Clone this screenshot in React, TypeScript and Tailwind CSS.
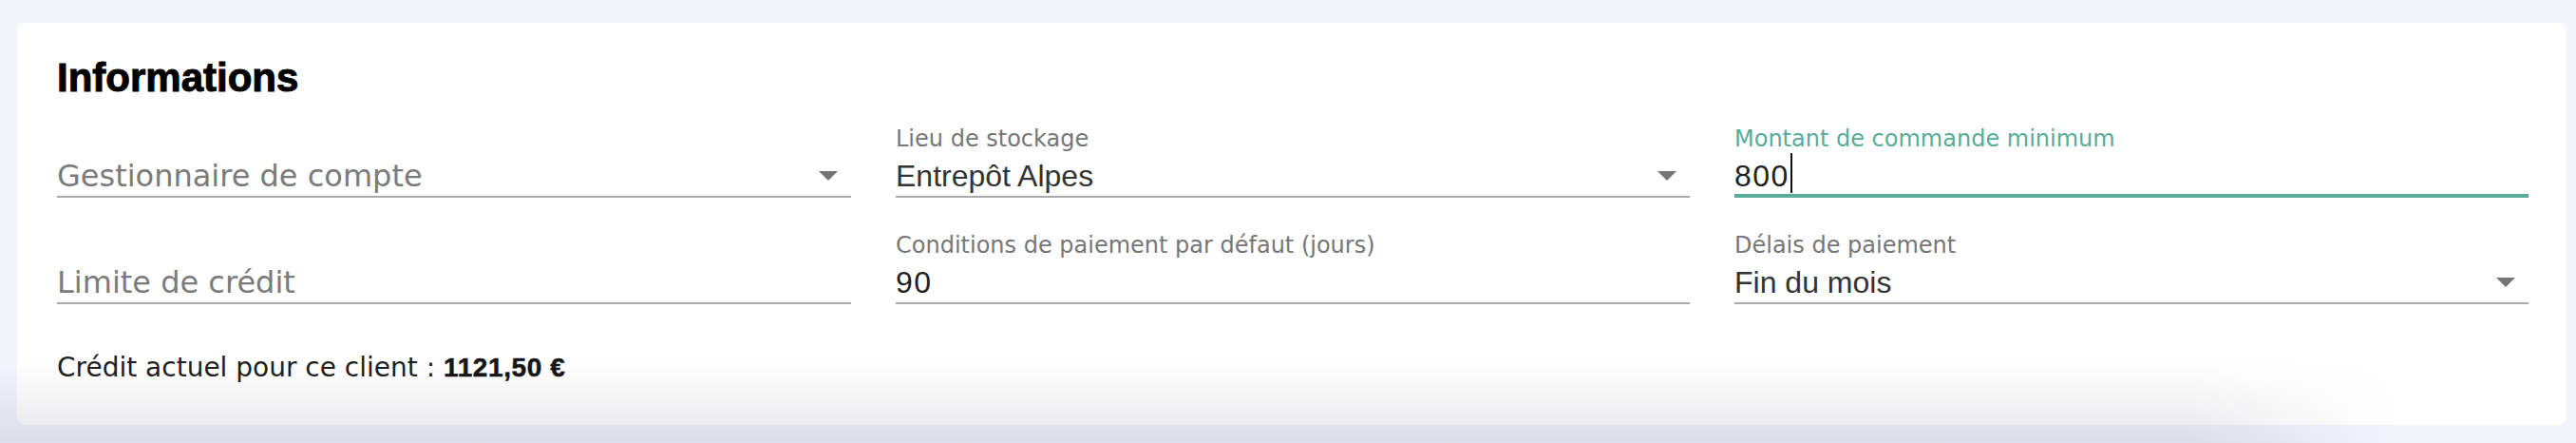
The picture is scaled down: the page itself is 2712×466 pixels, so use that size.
import React from "react";

type Field = {
  label?: string;
  placeholder?: string;
  value?: string;
  select?: boolean;
  focused?: boolean;
  numeric?: boolean;
};

const fields: Field[] = [
  { placeholder: "Gestionnaire de compte", select: true },
  { label: "Lieu de stockage", value: "Entrepôt Alpes", select: true },
  { label: "Montant de commande minimum", value: "800", focused: true, numeric: true },
  { placeholder: "Limite de crédit" },
  { label: "Conditions de paiement par défaut (jours)", value: "90", numeric: true },
  { label: "Délais de paiement", value: "Fin du mois", select: true },
];

function DropArrow() {
  return (
    <svg
      className="absolute right-[14px] top-[13px] h-[10px] w-[20px]"
      viewBox="0 0 20 10"
      aria-hidden
    >
      <polygon points="0,0 20,0 10,10" fill="#757575" />
    </svg>
  );
}

function FormField({ field }: { field: Field }) {
  return (
    <div className="flex flex-col">
      {/* floating label */}
      <div
        className={`h-[28px] font-['DejaVu_Sans',sans-serif] text-[24px] leading-[28px] ${
          field.focused ? "text-[#5aab97]" : "text-[#767676]"
        }`}
      >
        {field.label}
      </div>

      {/* input line */}
      <div
        className={`relative mt-[7px] ${
          field.focused ? "border-b-4 border-[#5aab97] pb-[1px]" : "border-b-2 border-[#a9a9a9] pb-[3px]"
        }`}
      >
        <div className="flex h-[36px] items-start">
          {field.value ? (
            <span
              className={`font-['Liberation_Sans',Arial,sans-serif] text-[32px] leading-[36px] ${
                field.numeric ? "tracking-[1.5px] text-[#1f1f1f]" : "text-[#333333]"
              }`}
            >
              {field.value}
            </span>
          ) : (
            <span className="font-['DejaVu_Sans',sans-serif] text-[32px] leading-[36px] text-[#7b7b7b]">
              {field.placeholder}
            </span>
          )}
          {field.focused && <span className="mt-[-6px] ml-[1px] h-[42px] w-[2px] bg-[#111]" />}
        </div>
        {field.select && <DropArrow />}
      </div>
    </div>
  );
}

export default function App() {
  return (
    <div className="relative h-[466px] w-full overflow-hidden bg-[#f2f5fc] pl-[18px] pr-[10px] pt-[24px]">
      <section className="h-[423px] rounded-[8px] bg-white pl-[42px] pr-[40px] pt-[34px]">
        <h2 className="font-['Liberation_Sans',Arial,sans-serif] text-[42px] font-bold leading-[48px] text-black [-webkit-text-stroke:1px_black]">
          Informations
        </h2>

        <div className="mt-[26px] grid grid-cols-3 gap-x-[47px] gap-y-[36px]">
          {fields.map((f, i) => (
            <FormField key={i} field={f} />
          ))}
        </div>

        <p className="mt-[51px] font-['DejaVu_Sans',sans-serif] text-[28px] leading-[32px] text-[#1f1f1f]">
          Crédit actuel pour ce client :{" "}
          <span className="font-['Liberation_Sans',Arial,sans-serif] font-bold tracking-[0.6px] text-[#161616] [-webkit-text-stroke:0.5px_#161616]">
            1121,50 €
          </span>
        </p>
      </section>

      {/* bottom fade */}
      <div className="pointer-events-none absolute inset-x-0 bottom-0 h-[86px] bg-linear-to-b from-transparent to-[#28284a1c] [mask-image:linear-gradient(to_right,black_85%,transparent_93%)]" />
    </div>
  );
}
